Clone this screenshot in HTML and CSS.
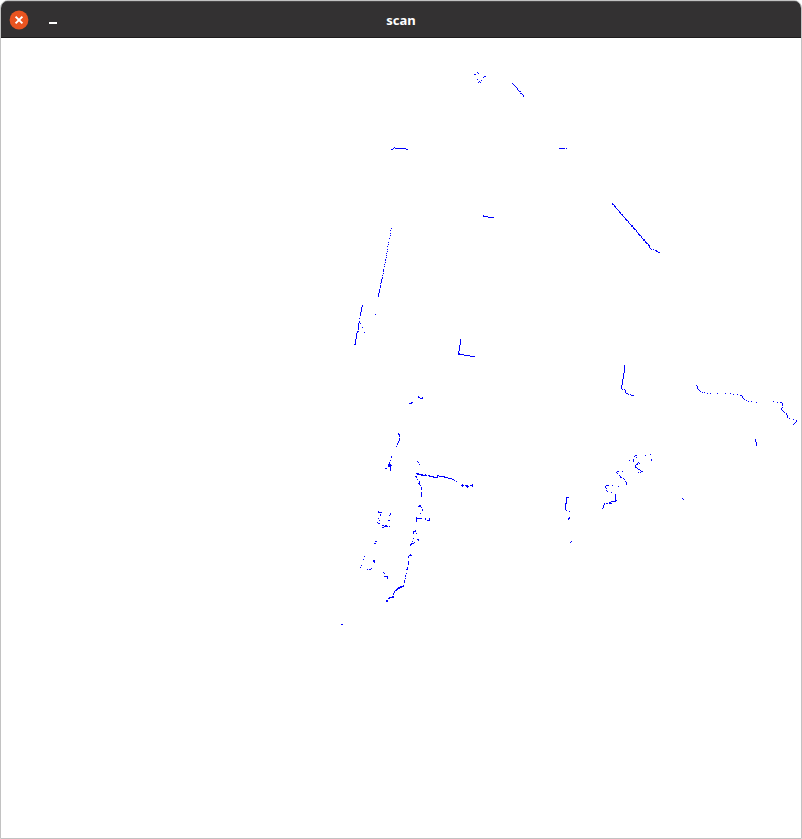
FILE: index.html
```html
<!DOCTYPE html>
<html lang="en">
<head>
<meta charset="utf-8">
<title>scan</title>
<link rel="stylesheet" href="styles.css">
</head>
<body>
<main class="window">
  <header class="titlebar">
    <div class="controls">
      <button class="control close" type="button" aria-label="Close">
        <svg viewBox="0 0 20 20" aria-hidden="true"><circle cx="10" cy="10" r="9.4"/><path d="M6.6 6.6l6.8 6.8M13.4 6.6l-6.8 6.8"/></svg>
      </button>
      <button class="control minimize" type="button" aria-label="Minimize">
        <svg viewBox="0 0 20 20" aria-hidden="true"><path d="M6 13h8"/></svg>
      </button>
    </div>
    <h1 class="title">scan</h1>
  </header>
  <svg class="plot" viewBox="1 38 800 800" preserveAspectRatio="xMidYMin meet" role="img" aria-label="Laser scan points">
    <g transform="translate(.5 .5)">
      <path transform="translate(460 60)" d="M14 14h1M17 12h0M18 13h0M24 16h1M23 17h0M17 19h0M19 21h0M18 22h0M20 22h0M21 20h0M52 23h0M53 24h0M54 25h0M55 26h0M56 27h0M57 28v1M58 30h0M59 31h1M60 33h1M62 34h0M63 35v1"/>
      <path transform="translate(380 135)" d="M11 14h1M13 13h0M14 12h0M15 13h10M26 14h1M179 13h5M186 13h0M103 80v1M104 81h3M108 82h5"/>
      <path transform="translate(340 220)" d="M51 8h0M50 10h0M50 13h0M50 15h0M49 18h0M48 22h0M48 24h0M47 26h0M47 29h0M47 31h0M46 33h0M46 35h0M46 37h0M45 39v1M45 42h0M44 44h0M44 46h0M43 49v2M43 53h0M42 55h0M42 57v1M41 59v3M40 63h0M40 65v2M39 69v3M38 73v3M35 94h0M22 85v1M21 87v4M20 92v3M19 98h0M19 101v1M20 103h0M18 103v6M17 111h1M17 112h0M16 113v5M15 119v5M14 124h1M22 107h0M24 112h0"/>
      <path transform="translate(600 195)" d="M12 8h0M12 9h1M14 10h0M14 11h1M15 12h0M16 13h0M17 14h0M18 15h0M19 16h0M19 17h1M20 18h0M21 19h1M22 20h0M23 21h0M24 22h0M25 23h0M25 24h1M26 25h1M28 26h0M28 27h0M29 28h0M30 29h0M31 30h1M31 31h1M33 32h0M33 33h1M34 34h1M36 35h0M36 36h0M37 37h0M38 38h0M38 39h1M39 40h1M41 41h0M41 42h0M42 43h0M43 44h1M43 45h1M45 46h0M45 47h1M46 48h1M48 49h0M48 50h1M49 51v1M50 53h0M51 54h0M53 54h0M55 55h1M56 56h1M58 57h1"/>
      <path transform="translate(445 330)" d="M15 9v5M14 15v5M13 21v3M14 23h0M14 24h4M19 25h5M25 26h4"/>
      <path transform="translate(610 360)" d="M14 5v7M13 13v5M12 19v5M11 25v3M12 29h0M14 29h0M15 30v2M16 33h1M18 34h0M20 34h0M21 35h2M86 25h0M87 26v2M88 29h0M89 30h0M90 31h0M92 32h0M94 32h0M97 33h0M100 33h0M107 33h0M115 33h0M120 33h0M123 34h0M127 34h0M130 35h1M132 36v1M133 38h0M134 39h0M136 40h0M138 41h0M141 41h0M146 42h0M163 41h0M167 42h0M170 42h1M172 43v2M172 47h0M171 48v1M172 50h0M173 51h0M174 52h0M176 53v1M177 55v2M179 58h0M183 59h0M186 60v1M185 62h0M184 63h0M183 64h0M145 79v2M146 82v3"/>
      <path transform="translate(380 385)" d="M38 11v1M39 12h0M40 13h2M42 12h0M29 18h2M31 17h1M18 48v1M19 49v2M19 53v2M18 56v1M17 58v1M16 61h0M11 71v1M10 75h0M9 77v3M8 79h2M8 80h3M8 81h2M10 82v3M5 83h1M37 76h0M38 77h0M39 79h0M36 88h2M37 89h5M41 90h1M43 90h3M45 89h0M48 90h1M49 91h4M53 92h4M57 91h0M57 90h1M59 91h5M64 92h3M68 93h3M72 94h1M74 95h0M76 96h0M81 100h2M82 99h0M82 101h0M85 100h2M86 101h1M87 102h0M88 101h0M90 100h2M92 99v2M35 91h1M36 92h0M37 94h0M39 96v3M38 98h0M40 100h0M41 102v2M41 107v4"/>
      <path transform="translate(350 490)" d="M68 16h2M69 15h1M71 17h0M72 19v1M70 23h0M66 27v4M67 28h4M75 28v1M77 30h2M79 28v1M63 41v2M64 41h0M65 40v1M66 43h0M63 48h0M62 51h0M67 49h1M68 50h0M64 52h0M61 53h2M60 54h1M60 55h0M60 64v1M59 65h2M58 66v1M58 71v3M57 77v2M56 79h0M56 83h0M55 85v1M55 88h0M54 90v2M53 95h0M50 96h3M48 97h3M47 98h2M46 99h1M45 100h1M44 101v1M43 103v1M42 106h1M39 107h4M38 108h1M36 110h1M36 111h1M28 21v1M29 22h2M30 24v1M28 28h0M29 30h0M27 32h0M28 33h1M40 23v1M39 25h0M38 30h1M39 36h0M32 35h1M32 37h1M34 36h3M35 35h1M25 51h1M24 53h1M14 66h0M13 69h0M11 75h0M10 77h0M23 70h1M23 71h1M24 72h0M17 79h0M19 79h1M21 78h0M33 82h0M34 83h0M34 86h3M37 87v1"/>
      <path transform="translate(555 445)" d="M11 52h2M11 53v5M10 58v6M11 65h0M14 66h0M14 72v1M13 73v1M16 96h0M15 97h0M127 53h0M128 54h0M47 63h0M48 60v2M49 58v1M51 58h1M54 58h2M54 57h1M56 56h4M60 49v7M61 55h0M56 47h0M57 40h0M63 41h0M51 40h2M50 41v1M51 43h0M51 45h0M52 46h0M61 27h0M62 26h1M62 28h0M67 26h0M64 30h0M65 31v1M66 32h0M68 33h0M69 34h0M70 36h0M71 37v2M74 15h0M79 11h0M80 10h1M81 12h0M78 14v2M90 10h0M95 9h0M96 14v1M83 17h0M84 18h0M82 18h0M81 19h1M80 20v2M81 22h0M82 23h0M83 24h1M85 25h0M86 26h1M85 27h0M83 27h0"/>
      <path transform="translate(341 624)" d="M0 0h1"/>
    </g>
  </svg>
</main>
</body>
</html>
```
FILE: styles.css
```css
* {
  box-sizing: border-box;
}

body {
  margin: 0;
  background: #fff;
  font-family: "Noto Sans", "Open Sans", sans-serif;
}

.window {
  min-height: 100vh;
  display: flex;
  flex-direction: column;
  border: 1px solid #c2c2c2;
  border-radius: 8px 8px 0 0;
  background: #fff;
  overflow: hidden;
}

.titlebar {
  display: grid;
  grid-template-columns: 1fr auto 1fr;
  align-items: center;
  height: 37px;
  padding: 0 8px;
  background: #333132;
  border-top: 1px solid #4a4849;
  border-bottom: 1px solid #1e1c1d;
}

.controls {
  display: flex;
  gap: 14px;
}

.control {
  width: 20px;
  height: 20px;
  padding: 0;
  border: 0;
  background: none;
}

.control svg {
  display: block;
  width: 20px;
  height: 20px;
  fill: none;
  stroke: #fff;
  stroke-width: 2;
}

.control circle {
  fill: #e95420;
  stroke: none;
}

.title {
  margin: 0;
  color: #fff;
  font-size: 13px;
  line-height: 20px;
  font-weight: 700;
}

.plot {
  display: block;
  width: 100%;
  fill: none;
  stroke: #00f;
  stroke-width: 1;
  stroke-linecap: square;
  shape-rendering: crispEdges;
}
```
